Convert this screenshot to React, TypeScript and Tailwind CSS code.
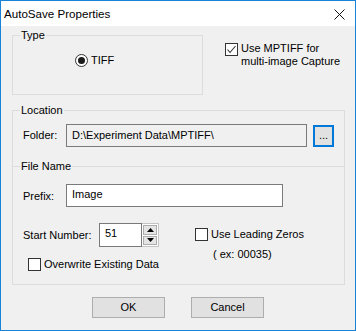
import React from "react";

const font = { fontFamily: '"Liberation Sans", Arial, sans-serif' };

function CheckBox({ checked }: { checked?: boolean }) {
    return (
        <div className="w-[13px] h-[13px] border border-[#333333] bg-white shrink-0 flex items-center justify-center">
            {checked && (
                <svg width="11" height="11" viewBox="0 0 11 11">
                    <polyline points="1.5,5.5 4,8.5 9.5,2" fill="none" stroke="#333333" strokeWidth="1.1" />
                </svg>
            )}
        </div>
    );
}

function Radio() {
    return (
        <div className="w-[13px] h-[13px] rounded-full border border-[#333333] bg-white shrink-0 flex items-center justify-center">
            <div className="w-[7px] h-[7px] rounded-full bg-[#1a1a1a]" />
        </div>
    );
}

function SpinArrow({ up }: { up?: boolean }) {
    return (
        <svg width="7" height="4" viewBox="0 0 7 4">
            <polygon points={up ? "0,4 7,4 3.5,0" : "0,0 7,0 3.5,4"} fill="#000" />
        </svg>
    );
}

export default function App() {
    return (
        <div
            className="w-[356px] h-[331px] border border-[#1883d7] bg-[#f0f0f0] flex flex-col text-[11px] text-black leading-[13px]"
            style={font}
        >
            {/* Title bar */}
            <div className="h-[25px] bg-white flex items-center justify-between pl-[3px] pr-[10px] shrink-0">
                <span className="text-[11.6px] leading-none mt-[1px]">AutoSave Properties</span>
                <svg width="11" height="11" viewBox="0 0 11 11" className="mt-[2px]">
                    <path d="M0.5 0.5 L10.5 10.5 M10.5 0.5 L0.5 10.5" stroke="#111" strokeWidth="1" />
                </svg>
            </div>

            {/* Top row */}
            <div className="flex mt-[9px] ml-[11px]">
                <div className="relative w-[191px] h-[60px] border border-[#dcdcdc]">
                    <span className="absolute left-[7px] -top-[7px] px-[1px] bg-[#f0f0f0]">Type</span>
                    <div className="flex items-center gap-[3px] ml-[62px] mt-[18px]">
                        <Radio />
                        <span>TIFF</span>
                    </div>
                </div>
                <div className="flex items-start gap-[3px] ml-[22px] mt-[8px]">
                    <CheckBox checked />
                    <span className="-mt-[1px]">
                        Use MPTIFF for
                        <br />
                        multi-image Capture
                    </span>
                </div>
            </div>

            {/* Location / File Name group */}
            <div className="relative ml-[11px] mt-[15px] w-[333px] h-[175px] border border-[#dcdcdc]">
                <span className="absolute left-[7px] -top-[7px] px-[1px] bg-[#f0f0f0]">Location</span>

                <div className="flex items-start pl-[10px] mt-[13px]">
                    <span className="w-[43px] mt-[5px]">Folder:</span>
                    <div className="w-[241px] h-[23px] border border-[#7a7a7a] bg-[#f0f0f0] flex items-center pl-[5px]">
                        D:\Experiment Data\MPTIFF\
                    </div>
                    <button className="ml-[6px] mt-[1px] w-[21px] h-[22px] border-2 border-[#0078d7] bg-[#e1e1e1] flex items-end justify-center pb-[4px] text-[11px] leading-none">
                        ...
                    </button>
                </div>

                <div className="relative mt-[19px] h-px bg-[#dcdcdc]">
                    <span className="absolute left-[7px] -top-[6px] px-[1px] bg-[#f0f0f0]">File Name</span>
                </div>

                <div className="flex items-center pl-[10px] mt-[17px]">
                    <span className="w-[43px] mt-[1px]">Prefix:</span>
                    <div className="w-[217px] h-[23px] border border-[#7a7a7a] bg-white flex items-start pl-[5px] pt-[3px]">
                        Image
                    </div>
                </div>

                <div className="flex pl-[10px] mt-[16px]">
                    <div className="flex flex-col w-[136px]">
                        <div className="flex items-center">
                            <span className="w-[76px]">Start Number:</span>
                            <div className="flex h-[24px]">
                                <div className="w-[43px] h-full border border-[#7a7a7a] bg-white pl-[5px] pt-[3px]">51</div>
                                <div className="w-[17px] h-full border border-[#c4c4c4] border-l-0 flex flex-col gap-[1px] p-[1px] bg-white">
                                    <div className="flex-1 border border-[#adadad] bg-[#e5e5e5] flex items-center justify-center">
                                        <SpinArrow up />
                                    </div>
                                    <div className="flex-1 border border-[#adadad] bg-[#e5e5e5] flex items-center justify-center">
                                        <SpinArrow />
                                    </div>
                                </div>
                            </div>
                        </div>
                        <div className="flex items-center gap-[3px] ml-[5px] mt-[11px]">
                            <CheckBox />
                            <span>Overwrite Existing Data</span>
                        </div>
                    </div>
                    <div className="flex flex-col ml-[36px] mt-[5px]">
                        <div className="flex items-center gap-[3px]">
                            <CheckBox />
                            <span>Use Leading Zeros</span>
                        </div>
                        <span className="ml-[18px] mt-[7px]">( ex: 00035)</span>
                    </div>
                </div>
            </div>

            {/* Buttons */}
            <div className="flex justify-center gap-[26px] mt-[12px]">
                <button className="w-[73px] h-[21px] border border-[#adadad] bg-[#e1e1e1] flex items-center justify-center">
                    OK
                </button>
                <button className="w-[73px] h-[21px] border border-[#adadad] bg-[#e1e1e1] flex items-center justify-center">
                    Cancel
                </button>
            </div>
        </div>
    );
}
